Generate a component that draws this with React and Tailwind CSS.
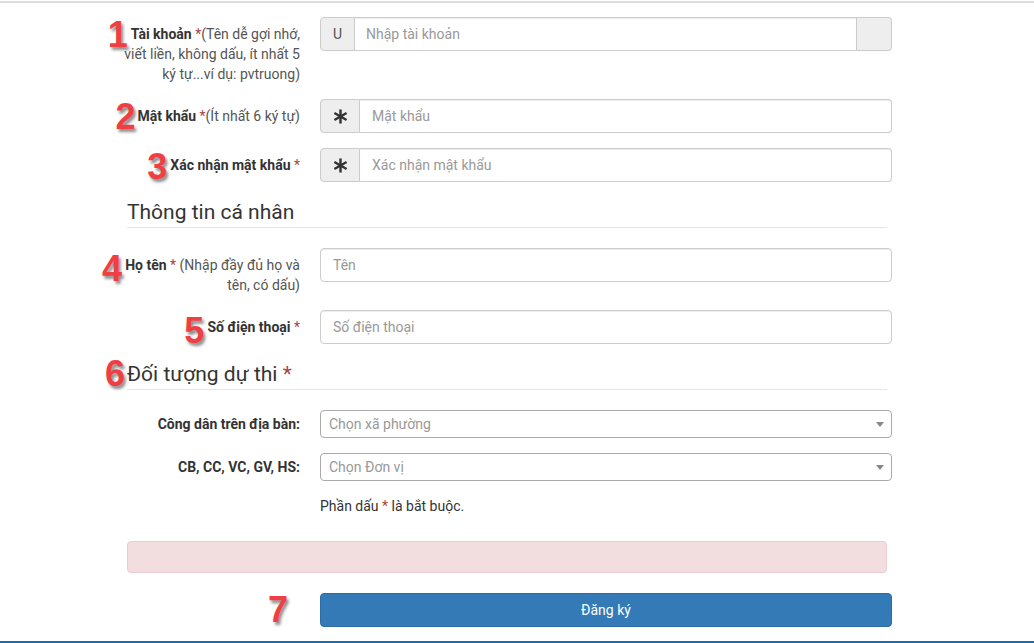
import React from "react";

const Num = ({ n, className = "" }) => (
  <span
    className={
      "absolute right-full font-bold text-[36px] leading-none text-[#ef3f42] [text-shadow:2px_3px_3px_rgba(0,0,0,0.45)] " +
      className
    }
    style={{ fontFamily: '"Liberation Sans", Arial, sans-serif' }}
  >
    {n}
  </span>
);

const Star = () => <span className="text-[#a94442]">*</span>;

const AsteriskIcon = () => (
  <svg width="15" height="15" viewBox="0 0 16 16">
    <g stroke="#333" strokeWidth="2.6" strokeLinecap="butt">
      <line x1="8" y1="0.5" x2="8" y2="15.5" />
      <line x1="1.5" y1="4.2" x2="14.5" y2="11.8" />
      <line x1="1.5" y1="11.8" x2="14.5" y2="4.2" />
    </g>
  </svg>
);

const Row = ({ label, children, labelPad = "pt-[7px]" }) => (
  <div className="flex mb-[15px]">
    <div className={"-ml-[3px] w-[176px] text-right text-[14px] leading-[20px] text-[#555] " + labelPad}>
      {label}
    </div>
    <div className="ml-[20px] w-[572px]">{children}</div>
  </div>
);

const TextInput = ({ placeholder }) => (
  <div className="h-[34px] border border-[#ccc] rounded-[4px] shadow-[inset_0_1px_1px_rgba(0,0,0,0.075)] flex items-center px-[12px] text-[14px] text-[#999]">
    {placeholder}
  </div>
);

const AddonInput = ({ placeholder }) => (
  <div className="h-[34px] flex">
    <div className="w-[40px] bg-[#eee] border border-[#ccc] rounded-l-[4px] flex items-center justify-center">
      <AsteriskIcon />
    </div>
    <div className="flex-1 border border-l-0 border-[#ccc] rounded-r-[4px] shadow-[inset_0_1px_1px_rgba(0,0,0,0.075)] flex items-center px-[12px] text-[14px] text-[#999]">
      {placeholder}
    </div>
  </div>
);

const Select = ({ placeholder }) => (
  <div className="h-[28px] border border-[#aaa] rounded-[4px] flex items-center justify-between pl-[8px] pr-[6px] text-[14px] text-[#999]">
    <span>{placeholder}</span>
    <span className="w-0 h-0 border-l-[4px] border-r-[4px] border-t-[5px] border-l-transparent border-r-transparent border-t-[#888] mr-[1px]" />
  </div>
);

const Heading = ({ children }) => (
  <div className="w-[760px] h-[31px] leading-[30px] text-[21px] text-[#333] border-b border-[#e5e5e5] mb-[20px]">
    {children}
  </div>
);

export default function App() {
  return (
    <div
      className="w-[1034px] h-[643px] bg-white relative overflow-hidden"
      style={{ fontFamily: 'Roboto, "Liberation Sans", Arial, sans-serif' }}
    >
      <div className="h-[2px] bg-[#ddd] mt-[1px]" />
      <div className="ml-[127px] pt-[14px]">
        <Row
          label={
            <>
              <span className="relative">
                <Num n="1" className="mr-[3px] top-[-9px]" />
              </span>
              <b className="text-[#333]">Tài khoản</b> <Star />(Tên dễ gợi nhớ, viết liền, không dấu, ít nhất 5 ký tự...ví dụ: pvtruong)
            </>
          }
        >
          <div className="h-[34px] flex">
            <div className="w-[35px] bg-[#eee] border border-[#ccc] rounded-l-[4px] flex items-center justify-center text-[14px] text-[#555]">
              U
            </div>
            <div className="flex-1 border border-l-0 border-[#ccc] shadow-[inset_0_1px_1px_rgba(0,0,0,0.075)] flex items-center px-[11px] text-[14px] text-[#999]">
              Nhập tài khoản
            </div>
            <div className="w-[35px] bg-[#eee] border border-l-0 border-[#ccc] rounded-r-[4px]" />
          </div>
        </Row>
        <Row
          label={
            <>
              <span className="relative">
                <Num n="2" className="mr-[2px] top-[-9px]" />
              </span>
              <b className="text-[#333]">Mật khẩu</b> <Star />(Ít nhất 6 ký tự)
            </>
          }
        >
          <AddonInput placeholder="Mật khẩu" />
        </Row>
        <Row
          label={
            <>
              <span className="relative">
                <Num n="3" className="mr-[3px] top-[-8px]" />
              </span>
              <b className="text-[#333]">Xác nhận mật khẩu</b> <Star />
            </>
          }
        >
          <AddonInput placeholder="Xác nhận mật khẩu" />
        </Row>

        <Heading>Thông tin cá nhân</Heading>

        <Row
          label={
            <>
              <span className="relative">
                <Num n="4" className="mr-[3px] top-[-6px]" />
              </span>
              <b className="text-[#333]">Họ tên</b> <Star /> (Nhập đầy đủ họ và tên, có dấu)
            </>
          }
        >
          <TextInput placeholder="Tên" />
        </Row>
        <Row
          label={
            <>
              <span className="relative">
                <Num n="5" className="mr-[3px] top-[-6px]" />
              </span>
              <b className="text-[#333]">Số điện thoại</b> <Star />
            </>
          }
        >
          <TextInput placeholder="Số điện thoại" />
        </Row>

        <Heading>
          <span className="relative">
            <Num n="6" className="mr-[2px] top-[-6px]" />
          </span>
          Đối tượng dự thi <Star />
        </Heading>

        <Row labelPad="pt-[4px]" label={<b className="text-[#333]">Công dân trên địa bàn:</b>}>
          <Select placeholder="Chọn xã phường" />
        </Row>
        <Row labelPad="pt-[4px]" label={<b className="text-[#333]">CB, CC, VC, GV, HS:</b>}>
          <Select placeholder="Chọn Đơn vị" />
        </Row>

        <div className="ml-[193px] text-[14px] leading-[20px] text-[#333]">
          Phần dấu <Star /> là bắt buộc.
        </div>

        <div className="mt-[25px] w-[760px] h-[32px] bg-[#f2dede] border border-[#ebccd1] rounded-[4px]" />

        <div className="flex mt-[20px]">
          <div className="w-[173px] flex justify-end pr-[12px]">
            <span
              className="font-bold text-[36px] leading-[34px] text-[#ef3f42] [text-shadow:2px_3px_3px_rgba(0,0,0,0.45)]"
              style={{ fontFamily: '"Liberation Sans", Arial, sans-serif' }}
            >
              7
            </span>
          </div>
          <div className="ml-[20px] w-[572px] h-[34px] bg-[#337ab7] border border-[#2e6da4] rounded-[4px] flex items-center justify-center text-white text-[14px]">
            Đăng ký
          </div>
        </div>
      </div>
      <div className="absolute left-0 right-0 bottom-0 h-[2px] bg-[#0e6fc0]" />
    </div>
  );
}
